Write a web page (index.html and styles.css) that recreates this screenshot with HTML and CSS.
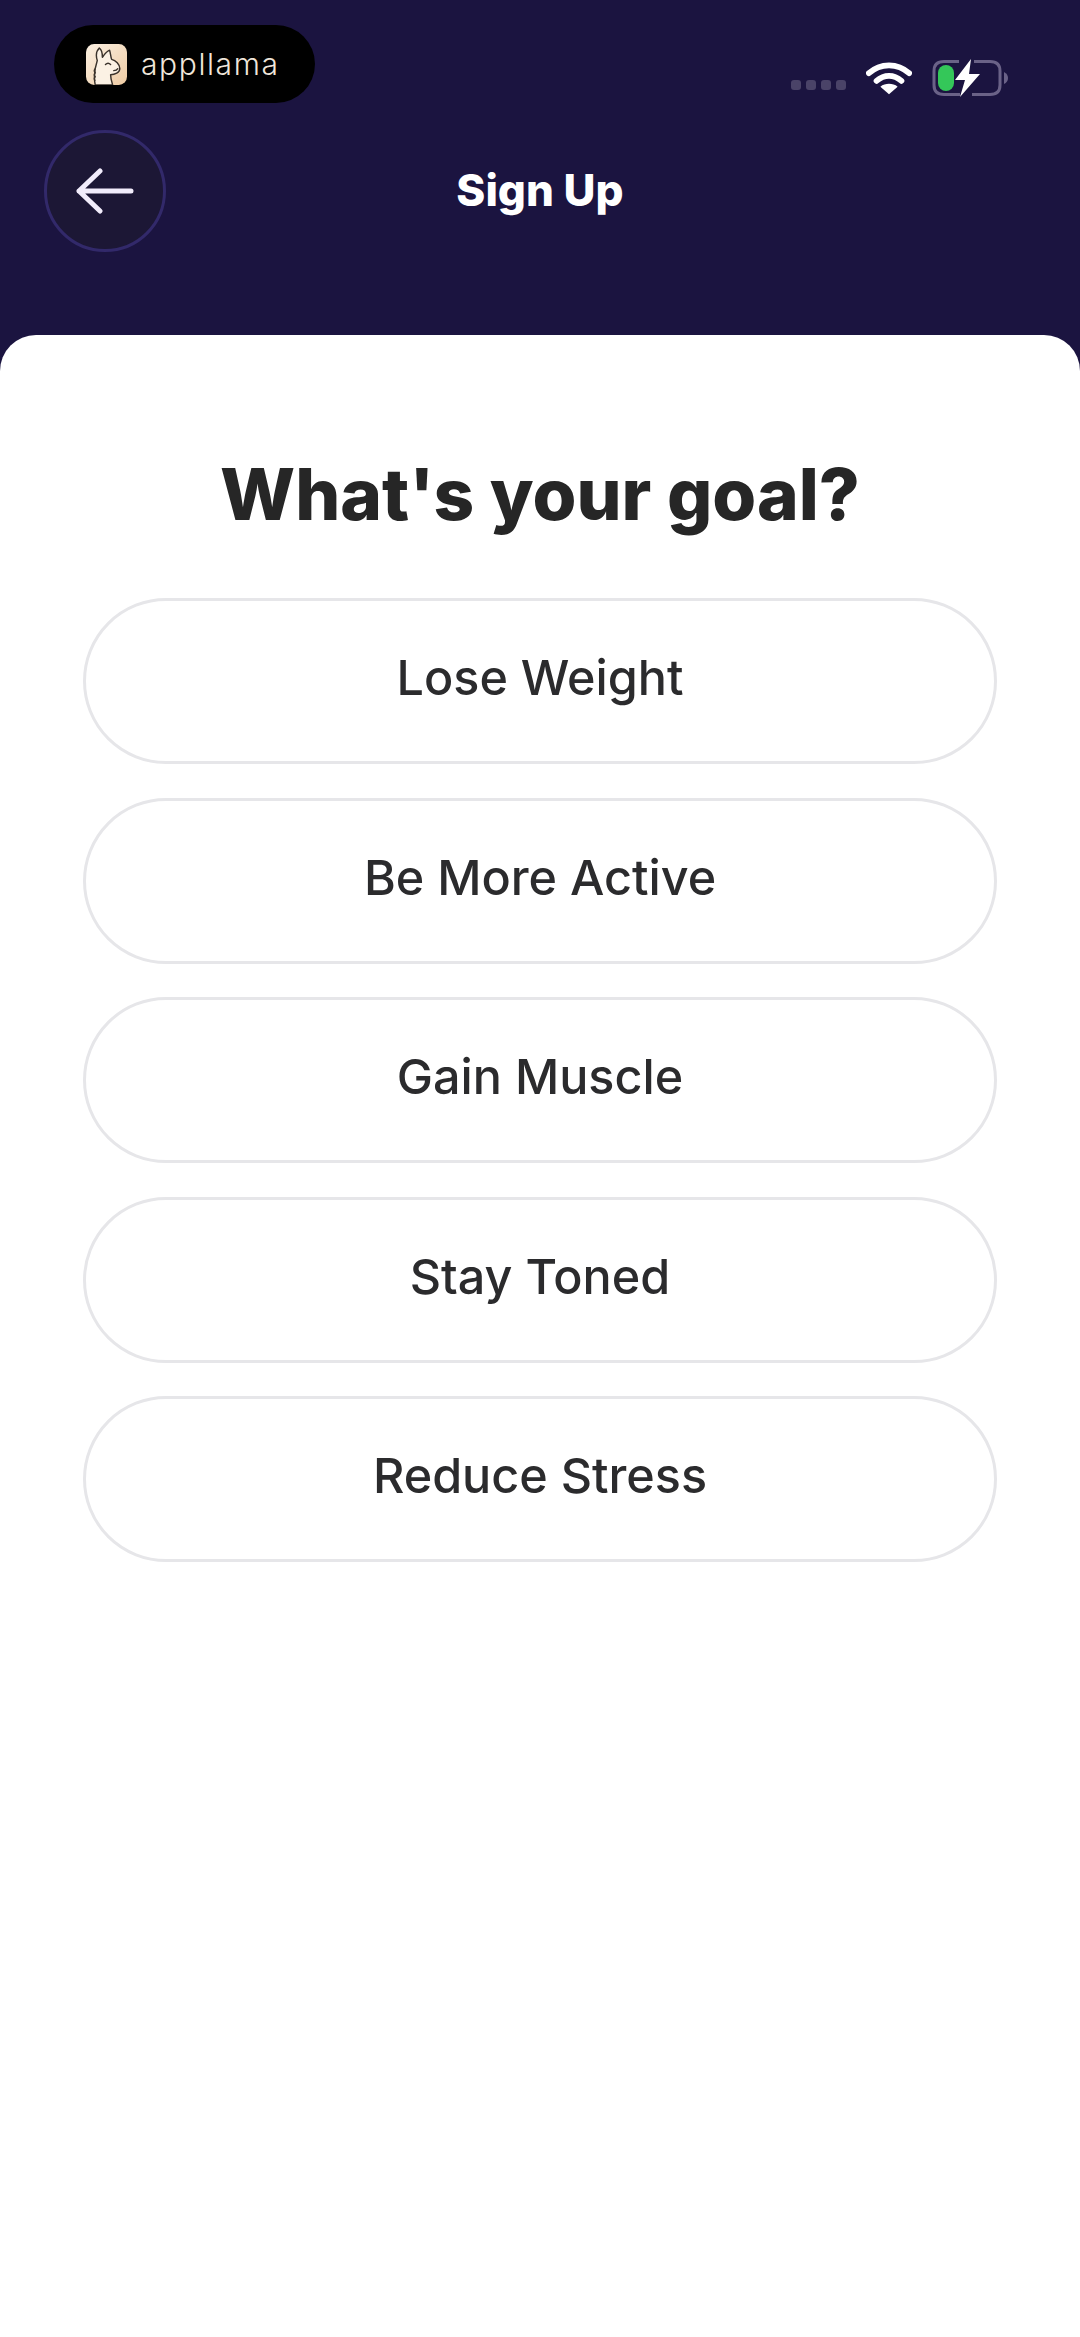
FILE: index.html
```html
<!DOCTYPE html>
<html lang="en">
<head>
<meta charset="UTF-8" />
<meta name="viewport" content="width=device-width, initial-scale=1" />
<title>Sign Up</title>
<link rel="stylesheet" href="styles.css">
</head>
<body>
  <header class="entete">
    <div class="barre-statut">
      <div class="marque">
        <svg class="marque-icone" viewBox="0 0 40 40" aria-hidden="true">
          <defs>
            <linearGradient id="fond-lama" x1="0" y1="0" x2="1" y2="1">
              <stop offset="0" stop-color="#fbf0e2"/>
              <stop offset="1" stop-color="#eecba3"/>
            </linearGradient>
          </defs>
          <rect width="40" height="40" rx="8" fill="url(#fond-lama)"/>
          <path d="M9 40 C7 30 9 22 11 16 C9 10 11 6 13 4 C16 6 16 10 16 13 C18 10 20 7 23 6 C24 9 24 12 25 15 C29 16 33 20 33 24 C33 28 28 30 24 30 C24 33 25 37 26 40 Z" fill="#fbf1e4" stroke="#3a322b" stroke-width="1.4" stroke-linejoin="round"/>
          <path d="M19 20 q2.5 -2.5 5 0" fill="none" stroke="#3a322b" stroke-width="1.4" stroke-linecap="round"/>
          <path d="M27 26 q3 0 4 -2" fill="none" stroke="#3a322b" stroke-width="1.2" stroke-linecap="round"/>
          <path d="M9 24 q-2 2 0 4 q-2 2 0 4 q-2 2 0 4" fill="none" stroke="#3a322b" stroke-width="1.2"/>
        </svg>
        <span class="marque-nom">appllama</span>
      </div>
      <div class="indicateurs">
        <div class="points"><i></i><i></i><i></i><i></i></div>
        <svg class="wifi" viewBox="0 0 48 36" aria-hidden="true">
          <path d="M3 13 C15 2 33 2 45 13" fill="none" stroke="#fff" stroke-width="6" stroke-linecap="round"/>
          <path d="M11 21 C19 14 29 14 37 21" fill="none" stroke="#fff" stroke-width="6" stroke-linecap="round"/>
          <path d="M24 35 L15 27 C20 23 28 23 33 27 Z" fill="#fff"/>
        </svg>
        <svg class="batterie" viewBox="0 0 76 38" aria-hidden="true">
          <path d="M27 2.5 H12 Q2 2.5 2 12 V26 Q2 35.500 12 35.500 H28 M42 2.500 H58 Q68 2.500 68 12 V26 Q68 35.500 58 35.500 H40" fill="none" stroke="#6a6287" stroke-width="3"/>
          <rect x="6" y="6" width="16" height="26" rx="8" fill="#34c759"/>
          <path d="M39 0 L23 21 H33 L28 38 L48 15 H37 Z" fill="#fff"/>
          <path d="M72 13 Q76 15 76 19 Q76 23 72 25 Z" fill="#6a6287"/>
        </svg>
      </div>
    </div>
    <div class="barre-titre">
      <button class="retour" type="button" aria-label="Back">
        <svg viewBox="0 0 58 46" aria-hidden="true">
          <path d="M24 3 L3 23 L24 43 M3 23 H55" fill="none" stroke="#f1ecfb" stroke-width="5" stroke-linecap="round" stroke-linejoin="round"/>
        </svg>
      </button>
      <h1>Sign Up</h1>
    </div>
  </header>

  <main class="carte">
    <h2>What's your goal?</h2>
    <div class="choix">
      <button class="option" type="button">Lose Weight</button>
      <button class="option" type="button">Be More Active</button>
      <button class="option" type="button">Gain Muscle</button>
      <button class="option" type="button">Stay Toned</button>
      <button class="option" type="button">Reduce Stress</button>
    </div>
  </main>
</body>
</html>
```

FILE: styles.css
```css
:root {
  --nuit: #1b1440;
  --encre: #2b2b2d;
  --bordure: #e6e6e9;
  --police: Inter, 'Noto Sans', sans-serif;
}
html, body {
  margin: 0;
  height: 100%;
}
body {
  width: 1080px;
  min-height: 2337px;
  background: var(--nuit);
  font-family: var(--police);
  display: flex;
  flex-direction: column;
}
.entete {
  height: 335px;
  box-sizing: border-box;
  padding: 25px 0 0 44px;
}
.barre-statut {
  display: flex;
  justify-content: space-between;
  padding: 0 72px 0 10px;
}
.marque {
  width: 261px;
  height: 78px;
  box-sizing: border-box;
  padding-left: 32px;
  background: #000;
  border-radius: 39px;
  display: flex;
  align-items: center;
  gap: 14px;
}
.marque-icone {
  width: 41px;
  height: 41px;
}
.marque-nom {
  font-family: Inter, sans-serif;
  font-weight: 300;
  font-size: 30px;
  letter-spacing: 1.6px;
  color: #f0e6da;
}
.indicateurs {
  display: flex;
  align-items: center;
  padding-top: 28px;
}
.points {
  display: flex;
  gap: 5px;
  margin: 14px 20px 0 0;
}
.points i {
  width: 10px;
  height: 10px;
  border-radius: 3px;
  background: #4a4368;
}
.wifi {
  width: 46px;
  height: 36px;
  margin-right: 20px;
}
.batterie {
  width: 76px;
  height: 38px;
}
.barre-titre {
  position: relative;
  margin-top: 27px;
  height: 122px;
  display: flex;
  align-items: center;
}
.retour {
  width: 122px;
  height: 122px;
  padding: 0;
  border-radius: 50%;
  border: 3px solid #32296a;
  background: #1c1735;
  display: flex;
  align-items: center;
  justify-content: center;
}
.retour svg {
  width: 58px;
  height: 46px;
}
h1 {
  position: absolute;
  left: -44px;
  right: 0;
  top: 38px;
  margin: 0;
  text-align: center;
  font-size: 44px;
  line-height: 44px;
  font-weight: 800;
  color: #fff;
}
.carte {
  flex: 1;
  background: #fff;
  border-radius: 36px 36px 0 0;
  padding: 117px 83px 0;
}
h2 {
  margin: 0 0 62px;
  text-align: center;
  font-size: 71px;
  line-height: 84px;
  font-weight: 800;
  color: #262626;
}
.choix {
  display: flex;
  flex-direction: column;
  gap: 33.5px;
}
.option {
  height: 166px;
  padding: 0 0 7px;
  background: #fff;
  border: 3px solid var(--bordure);
  border-radius: 83px;
  font-family: var(--police);
  font-size: 48.5px;
  font-weight: 550;
  color: var(--encre);
}
```
